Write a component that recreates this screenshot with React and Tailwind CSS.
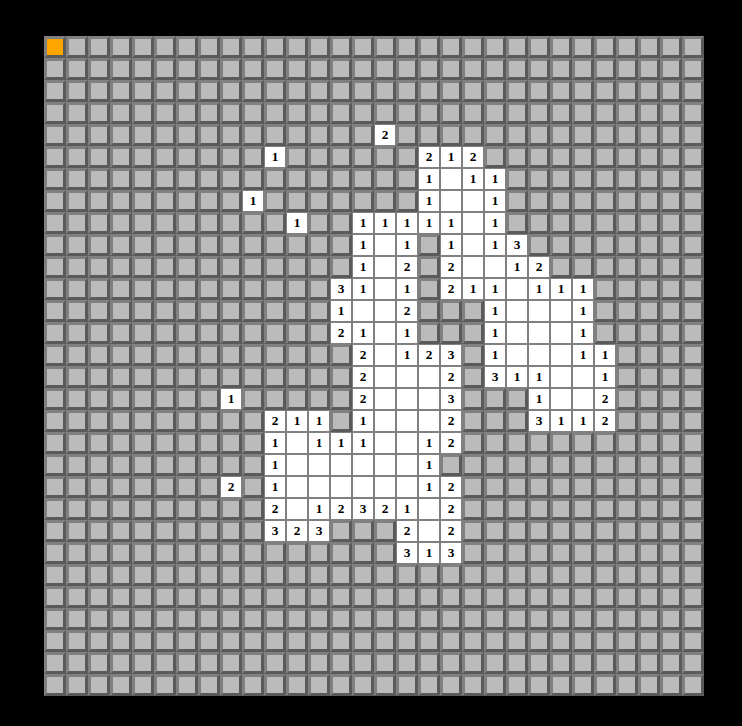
const SIZE = 30;

// revealed cells, row -> { col: number, 0 = blank }
const spans = (from, to) => {
  const out = {};
  for (let c = from; c <= to; c++) out[c] = 0;
  return out;
};

const REVEALED = {
  4: { 15: 2 },
  5: { 10: 1, 17: 2, 18: 1, 19: 2 },
  6: { 17: 1, 18: 0, 19: 1, 20: 1 },
  7: { 9: 1, 17: 1, 18: 0, 19: 0, 20: 1 },
  8: { 11: 1, 14: 1, 15: 1, 16: 1, 17: 1, 18: 1, 19: 0, 20: 1 },
  9: { 14: 1, 15: 0, 16: 1, 18: 1, 19: 0, 20: 1, 21: 3 },
  10: { 14: 1, 15: 0, 16: 2, 18: 2, 19: 0, 20: 0, 21: 1, 22: 2 },
  11: { 13: 3, 14: 1, 15: 0, 16: 1, 18: 2, 19: 1, 20: 1, 21: 0, 22: 1, 23: 1, 24: 1 },
  12: { 13: 1, 14: 0, 15: 0, 16: 2, 20: 1, ...spans(21, 23), 24: 1 },
  13: { 13: 2, 14: 1, 15: 0, 16: 1, 20: 1, ...spans(21, 23), 24: 1 },
  14: { 14: 2, 15: 0, 16: 1, 17: 2, 18: 3, 20: 1, ...spans(21, 23), 24: 1, 25: 1 },
  15: { 14: 2, ...spans(15, 17), 18: 2, 20: 3, 21: 1, 22: 1, 23: 0, 24: 0, 25: 1 },
  16: { 8: 1, 14: 2, ...spans(15, 17), 18: 3, 22: 1, 23: 0, 24: 0, 25: 2 },
  17: { 10: 2, 11: 1, 12: 1, 14: 1, ...spans(15, 17), 18: 2, 22: 3, 23: 1, 24: 1, 25: 2 },
  18: { 10: 1, 11: 0, 12: 1, 13: 1, 14: 1, 15: 0, 16: 0, 17: 1, 18: 2 },
  19: { 10: 1, ...spans(11, 16), 17: 1 },
  20: { 8: 2, 10: 1, ...spans(11, 16), 17: 1, 18: 2 },
  21: { 10: 2, 11: 0, 12: 1, 13: 2, 14: 3, 15: 2, 16: 1, 17: 0, 18: 2 },
  22: { 10: 3, 11: 2, 12: 3, 16: 2, 17: 0, 18: 2 },
  23: { 16: 3, 17: 1, 18: 3 },
};

function Cell({ row, col }) {
  const value = REVEALED[row]?.[col];
  if (value !== undefined) {
    return (
      <div className="w-[22px] h-[22px] flex items-center justify-center bg-white border border-[#808080] font-['Liberation_Serif',serif] font-bold text-[13.33px] leading-none text-black">
        {value > 0 ? value : ""}
      </div>
    );
  }
  const active = row === 0 && col === 0;
  return (
    <div
      className={`w-[22px] h-[22px] border-[3px] border-t-[#808080] border-l-[#808080] border-r-[#5a5a5a] border-b-[#5a5a5a] ${
        active ? "bg-[#ffa500]" : "bg-[#bbbbbb]"
      }`}
    />
  );
}

export default function App() {
  const rows = Array.from({ length: SIZE }, (_, i) => i);
  return (
    <div className="w-[742px] h-[726px] bg-black pt-[36px] pl-[44px]">
      <div className="grid grid-cols-[repeat(30,22px)] w-[660px]">
        {rows.map((row) =>
          rows.map((col) => <Cell key={`${row}-${col}`} row={row} col={col} />)
        )}
      </div>
    </div>
  );
}
